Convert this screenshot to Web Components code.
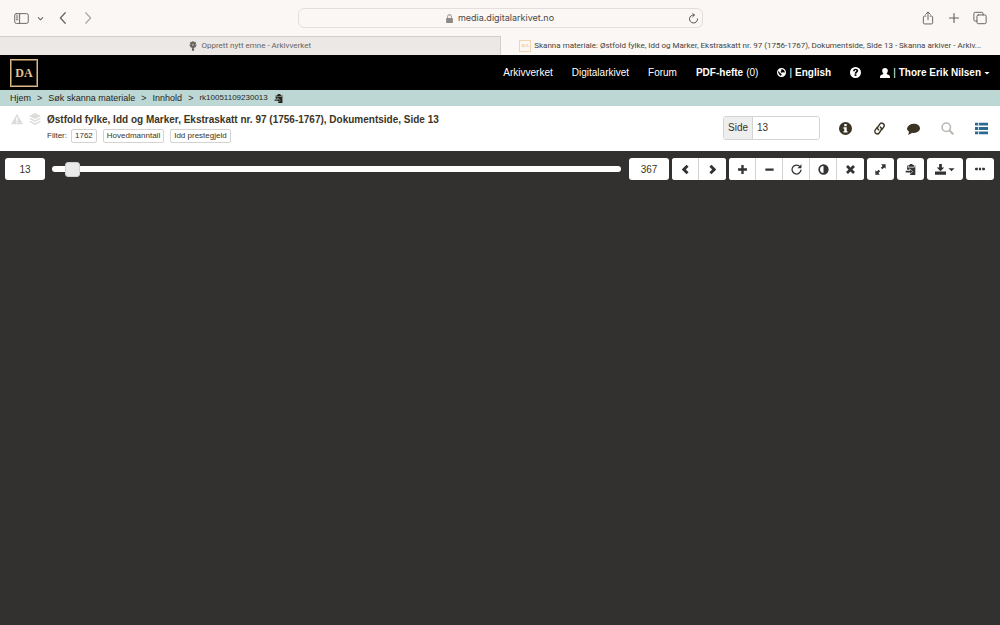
<!DOCTYPE html>
<html lang="no">
<head>
<meta charset="utf-8">
<meta name="viewport" content="width=device-width, initial-scale=1">
<title>Skanna materiale - Arkivverket</title>
<style>
html, body { margin: 0; height: 100%; }
body { font: 10px/14px "Liberation Sans", Arial, sans-serif; color: #3b3425; background: #333130; }
</style>
</head>
<body>
<da-app></da-app>
<script>
const define = (name, html, setup) => {
  const template = document.createElement('template');
  template.innerHTML = html;
  customElements.define(name, class extends HTMLElement {
    connectedCallback() {
      if (this.shadowRoot) return;
      this.attachShadow({ mode: 'open' }).append(template.content.cloneNode(true));
      if (setup) setup(this, this.shadowRoot);
    }
  });
};

const line = (d, w = 1.2) => `<path d="${d}" fill="none" stroke="currentColor" stroke-width="${w}" stroke-linecap="round" stroke-linejoin="round"/>`;
const solid = (d) => `<path d="${d}" fill="currentColor" fill-rule="evenodd"/>`;
const ICONS = {
  sidebar: line('M2.5 2.8h11a1.7 1.7 0 0 1 1.7 1.7v7a1.7 1.7 0 0 1-1.7 1.7h-11A1.7 1.7 0 0 1 .8 11.500v-7A1.7 1.7 0 0 1 2.500 2.800zM6 3v10M2.600 5.300h1.500M2.600 7.300h1.500M2.600 9.300h1.500', 1),
  down: line('M3 6l5 5 5-5', 2.4),
  back: line('M11 1L4.500 8l6.500 7', 1.6),
  forward: line('M5 1l6.500 7L5 15', 1.5),
  lock: solid('M3 7h1V4.500a4 4 0 0 1 8 0V7h1a1 1 0 0 1 1 1v7a1 1 0 0 1-1 1H3a1 1 0 0 1-1-1V8a1 1 0 0 1 1-1zm2.500 0h5V4.500a2.500 2.500 0 0 0-5 0z'),
  reload: line('M9 2.800A5.900 5.900 0 1 0 14 8.700M6.800.600L9.300 3 6.800 5.500', 1.4),
  share: line('M5.500 5.800H4a1.300 1.300 0 0 0-1.300 1.300v6.400A1.300 1.300 0 0 0 4 14.800h8a1.300 1.300 0 0 0 1.300-1.300V7.100A1.300 1.300 0 0 0 12 5.800h-1.500M8 10V1.300M5.300 3.800L8 1.200l2.700 2.600', 1.1),
  add: line('M8 2v12M2 8h12', 1.5),
  tabs: line('M6 4.500h7.500a1.500 1.500 0 0 1 1.500 1.500v7a1.500 1.500 0 0 1-1.500 1.500H6A1.500 1.500 0 0 1 4.500 13V6A1.500 1.500 0 0 1 6 4.500zM4.500 11.500h-2A1.500 1.500 0 0 1 1 10V3a1.500 1.500 0 0 1 1.500-1.500H10A1.500 1.500 0 0 1 11.500 3v1.500', 1.1),
  crest: solid('M7 0h2v2l3-1 1 3-2 1 3 1-2 4-3 1 1 2-1 3H7l-1-3 1-2-3-1-2-4 3-1-2-1 1-3 3 1zM7 5v2h2V5z'),
  globe: solid('M8 0a8 8 0 1 1 0 16A8 8 0 0 1 8 0zm1 2L6.500 3.200 8 5 6 7l2 1.500 3-1 2 1L14 7l-1.500-3-2-1.500zM3 4.500L2 8l2 3.500L7 14l1.500-3L6 9.500 4.500 8z'),
  question: solid('M8 0a8 8 0 1 1 0 16A8 8 0 0 1 8 0zM4.500 6h2.400c0-1 .5-1.500 1.200-1.500.8 0 1.300.5 1.300 1.100 0 1.300-2.600 1.500-2.600 4.100h2.400c0-1.600 2.700-1.900 2.700-4.300C11.900 3.500 10.500 2.400 8.100 2.400 5.800 2.400 4.500 3.800 4.500 6zm2.200 4.700v2.400h2.600v-2.400z'),
  user: solid('M8 0c2.800 0 4.500 1.700 4.500 4.300 0 1.800-.8 3.500-1.800 4.500v.7c2.300.6 5.300 2 5.300 4.500v2H0v-2c0-2.500 3-3.900 5.300-4.500v-.7c-1-1-1.800-2.700-1.800-4.500C3.500 1.700 5.200 0 8 0z'),
  caret: solid('M1 5h14l-7 7z'),
  clip: solid('M7 0h4v1.500h2V4H5V1.500h2zM4 2v3h10V2h1v14H6.500l5-5-5-5v2.500H3V2zM1 9.800h6.500V8l3.300 3-3.300 3v-1.800H1z'),
  warning: solid('M8 1l8 14H0zM7 5.500v5h2v-5zM7 11.500v2h2v-2z'),
  layers: solid('M8 0l8 4-8 4-8-4zM2 6.800l6 3 6-3 2 1-8 4-8-4zM2 10.800l6 3 6-3 2 1L8 16l-8-4.200z'),
  info: solid('M8 0a8 8 0 1 1 0 16A8 8 0 0 1 8 0zM6.500 2.500v2.700h3V2.500zM5.500 6.500v1.800h1v3h-1V13h5v-1.700h-1V6.500z'),
  link: '<g transform="rotate(-55 8 8)">' + line('M7.500 4.800H3.600a3 3 0 0 0 0 6H7a3 3 0 0 0 3-3M8.500 11.200h3.900a3 3 0 0 0 0-6H9a3 3 0 0 0-3 3', 1.7) + '</g>',
  comment: solid('M8.500 2C12.700 2 16 4.500 16 7.700s-3.300 5.700-7.500 5.700c-.8 0-1.600-.1-2.400-.3C4.800 14.500 3 15.300 1 15.500c.9-.9 1.500-2 1.600-3.500C1 10.900 0 9.400 0 7.700 1 4 4.300 2 8.500 2z'),
  search: '<circle cx="6.500" cy="6.500" r="5.200" fill="none" stroke="currentColor" stroke-width="2"/>' + line('M10.800 10.800l3.600 3.600', 2.6),
  list: solid('M0 1h4v3.300H0zM5 1h11v3.300H5zM0 6.300h4v3.400H0zM5 6.300h11v3.400H5zM0 11.700h4V15H0zM5 11.700h11V15H5z'),
  prev: solid('M9.500 1L12.500 4l-4 4 4 4-3 3-7-7z'),
  next: solid('M6.500 1L3.500 4l4 4-4 4 3 3 7-7z'),
  plus: solid('M6.300 1.500h3.400v4.800h4.800v3.400H9.700v4.800H6.300V9.700H1.500V6.300h4.800z'),
  minus: solid('M2 6.500h12v3.200H2z'),
  rotate: line('M13 3.800A6.500 6.500 0 1 0 14.500 9', 1.8) + solid('M15.200.5v5.800H9.400z'),
  contrast: solid('M8 .5a7.500 7.500 0 1 1 0 15 7.500 7.500 0 0 1 0-15zM8 3a5 5 0 0 0 0 10z'),
  close: solid('M4.300 1.500L8 5.200l3.700-3.700 2.800 2.800L10.800 8l3.700 3.700-2.800 2.800L8 10.800l-3.700 3.700-2.800-2.800L5.200 8 1.500 4.300z'),
  expand: solid('M9 .5h6.500V7l-2.200-2-2.600 2.500L8.500 5.300 11 2.800zM7 15.500H.5V9l2.200 2 2.600-2.500 2.200 2.200L5 13.200z'),
  download: solid('M6 0h4v5h3.500L8 10.500 2.500 5H6zM0 11h16v4.500H0z'),
  more: solid('M1.500 6h3v4h-3A1.500 1.500 0 0 1 0 8.500v-1A1.500 1.500 0 0 1 1.500 6zM6.300 6h3.400v4H6.300zM11.500 6h3A1.500 1.500 0 0 1 16 7.500v1a1.500 1.500 0 0 1-1.500 1.500h-3z')
};

define('da-icon', `<style>
:host { display: inline-flex; flex: none; width: var(--size, 12px); height: var(--size, 12px); }
svg { display: block; width: 100%; height: 100%; }
</style><svg viewBox="0 0 16 16" aria-hidden="true"></svg>`,
(host, root) => { root.querySelector('svg').innerHTML = ICONS[host.getAttribute('name')] || ''; });

define('da-logo', `<style>
:host { display: flex; flex: none; box-sizing: border-box; align-items: center; justify-content: center;
  width: 28px; height: 28px; border: 1px solid #dcb987; outline: 1px solid #6e5c43; outline-offset: -2px; color: #e5c595;
  font: bold 12px/14px "Liberation Serif", "Times New Roman", serif; }
:host([small]) { width: 12px; height: 12px; border: 1px solid #f1d6ad; outline: 0; color: #ecc792; font-size: 5px; line-height: 6px; }
</style><slot></slot>`);

define('browser-bar', `<style>
:host { display: grid; grid-template-columns: 1fr minmax(0, 405px) 1fr; align-items: center; height: 36px;
  background: #fbf7f4; color: #65615e; font: 9px/14px Inter, sans-serif; }
button { display: flex; padding: 0; border: 0; background: none; color: inherit; }
.left, .right { display: flex; align-items: center; }
.left { padding-left: 14px; gap: 13px; }
.menu { display: flex; align-items: center; gap: 8px; }
.right { justify-content: flex-end; gap: 13px; padding-right: 13px; }
.dim { color: #aaa5a1; }
.address { display: flex; box-sizing: border-box; align-items: center; justify-content: center; height: 20px; padding: 0 3px 0 13px;
  border: 1px solid #e4dfdc; border-radius: 6px; color: #4b4846; }
.address span { display: flex; flex: 1; justify-content: center; align-items: center; gap: 4px; }
.lock { color: #8d8986; }
</style>
<div class="left"><div class="menu"><button aria-label="Sidefelt"><da-icon name="sidebar" style="--size:15px"></da-icon></button>
<button aria-label="Meny"><da-icon name="down" style="--size:7px"></da-icon></button></div>
<button aria-label="Tilbake"><da-icon name="back"></da-icon></button><button class="dim" aria-label="Frem"><da-icon name="forward"></da-icon></button></div>
<div class="address"><span><da-icon class="lock" name="lock" style="--size:9px"></da-icon>media.digitalarkivet.no</span>
<button aria-label="Last inn"><da-icon name="reload" style="--size:11px"></da-icon></button></div>
<div class="right"><button aria-label="Del"><da-icon name="share" style="--size:14px"></da-icon></button>
<button aria-label="Ny fane"><da-icon name="add"></da-icon></button><button aria-label="Faner"><da-icon name="tabs" style="--size:14px"></da-icon></button></div>`);

define('browser-tab', `<style>
:host { display: flex; flex: 1 1 0; min-width: 0; box-sizing: border-box; align-items: center; justify-content: center; gap: 3px; padding: 0 12px;
  color: #454240; }
:host([idle]) { background: #ece8e6; border-top: 1px solid #d2cecb; border-right: 1px solid #d2cecb; color: #686461; }
span { overflow: hidden; text-overflow: ellipsis; white-space: nowrap; }
</style><slot name="icon"></slot><span><slot></slot></span>`);

define('browser-tabs', `<style>
:host { display: flex; height: 19px; background: #fbf7f4; font: 8px/12px Roboto, sans-serif; }
</style><browser-tab idle><da-icon slot="icon" name="crest" style="--size:10px"></da-icon>Opprett nytt emne - Arkivverket</browser-tab>
<browser-tab><da-logo slot="icon" small>DA</da-logo>Skanna materiale: Østfold fylke, Idd og Marker, Ekstraskatt nr. 97 (1756-1767), Dokumentside, Side 13 - Skanna arkiver - Arkiv...</browser-tab>`);

define('site-nav', `<style>
:host { display: flex; align-items: center; justify-content: space-between; height: 35px; padding: 0 10px; background: #000; color: #fff; }
nav { display: flex; align-items: center; gap: 19px; }
a { display: flex; align-items: center; gap: 3px; color: inherit; text-decoration: none; white-space: nowrap; }
</style><da-logo>DA</da-logo>
<nav><a href="#">Arkivverket</a><a href="#">Digitalarkivet</a><a href="#">Forum</a><a href="#"><b>PDF-hefte</b>(0)</a>
<a href="#"><da-icon name="globe" style="--size:9px"></da-icon>|<b>English</b></a>
<a href="#" aria-label="Hjelp"><da-icon name="question" style="--size:11px"></da-icon></a>
<a href="#"><da-icon name="user" style="--size:10px"></da-icon>|<b>Thore Erik Nilsen</b><da-icon name="caret" style="--size:6px"></da-icon></a></nav>`);

define('bread-crumbs', `<style>
:host { display: flex; align-items: center; height: 16px; padding: 0 10px; gap: 6px; background: #bcd7d4; color: #29251c; font-size: 9px; line-height: 16px; }
a { color: inherit; text-decoration: none; }
.id { font-size: 8px; }
button { display: flex; padding: 0; border: 0; background: none; color: inherit; }
</style><a href="#">Hjem</a>&gt;<a href="#">Søk skanna materiale</a>&gt;<a href="#">Innhold</a>&gt;<span class="id">rk10051109230013</span>
<button aria-label="Kopier"><da-icon name="clip" style="--size:9px"></da-icon></button>`);

define('filter-tag', `<style>
:host { display: block; padding: 0 3px; border: 1px solid #d5d3d0; border-radius: 2px; font-size: 8px; line-height: 12px; white-space: nowrap; }
</style><slot></slot>`);

define('source-header', `<style>
:host { display: flex; align-items: flex-start; justify-content: space-between; box-sizing: border-box; min-height: 45px; padding: 7px 12px 8px 11px; background: #fff; }
.source { display: flex; gap: 6px; }
.faded { color: #dddcda; }
h1 { margin: 0; font-size: 10px; line-height: 14px; }
.filters { display: flex; align-items: center; gap: 6px; margin-top: 2px; font-size: 8px; line-height: 14px; }
.filters span { margin-right: -2px; }
.tools { display: flex; align-items: center; gap: 21px; margin-top: 3px; }
form { display: flex; box-sizing: border-box; width: 97px; height: 24px; margin-right: -2px; border: 1px solid #d6d4d2; border-radius: 3px; overflow: hidden; }
label { padding: 0 4px; border-right: 1px solid #d6d4d2; background: #eee; line-height: 22px; }
input { flex: 1; min-width: 0; padding: 0 4px; border: 0; background: #fff; color: inherit; font: inherit; }
button { display: flex; padding: 0; border: 0; background: none; color: inherit; }
.search { color: #bbb8b4; } .list { color: #2b6a90; }
</style>
<div class="source"><da-icon class="faded" name="warning"></da-icon><da-icon class="faded" name="layers"></da-icon>
<div><h1>Østfold fylke, Idd og Marker, Ekstraskatt nr. 97 (1756-1767), Dokumentside, Side 13</h1>
<div class="filters"><span>Filter:</span><filter-tag>1762</filter-tag><filter-tag>Hovedmanntall</filter-tag><filter-tag>Idd prestegjeld</filter-tag></div></div></div>
<div class="tools"><form><label for="page">Side</label><input id="page" type="text" value="13"></form>
<button aria-label="Informasjon"><da-icon name="info" style="--size:13px"></da-icon></button><button aria-label="Lenke"><da-icon name="link" style="--size:13px"></da-icon></button>
<button aria-label="Kommentar"><da-icon name="comment" style="--size:13px"></da-icon></button><button class="search" aria-label="Søk"><da-icon name="search" style="--size:13px"></da-icon></button>
<button class="list" aria-label="Liste"><da-icon name="list" style="--size:13px"></da-icon></button></div>`);

define('tool-group', `<style>
:host { display: flex; height: 22px; border-radius: 3px; overflow: hidden; background: #fff; }
::slotted(tool-button:not(:first-child)) { box-shadow: -1px 0 #d4d2d0; }
</style><slot></slot>`);

define('tool-button', `<style>
:host { display: flex; }
button { display: flex; align-items: center; justify-content: center; gap: 2px; min-width: 27px; padding: 0 8px; border: 0; background: #fff; color: #333; }
:host([wide]) button { padding: 0 9px; }
</style><button><slot></slot></button>`,
(host, root) => root.querySelector('button').setAttribute('aria-label', host.getAttribute('label')));

define('page-slider', `<style>
:host { display: flex; flex: 1; min-width: 0; align-items: center; }
.track { display: flex; flex: 1; height: 6px; align-items: center; border-radius: 3px; background: #fff; }
input { appearance: none; flex: 1; min-width: 0; height: 16px; margin: 0 -7px; background: none; }
input::-webkit-slider-thumb { appearance: none; box-sizing: border-box; width: 15px; height: 15px; border: 1px solid #cfcfcf; border-radius: 3px; background: #e9e9e9; }
</style><div class="track"><input type="range" min="0" max="367" value="13" aria-label="Side"></div>`);

define('viewer-toolbar', `<style>
:host { display: flex; align-items: center; gap: 3px; padding: 7px 6px 7px 5px; color: #3b3425; }
input { box-sizing: border-box; width: 40px; height: 22px; padding: 0; border: 0; border-radius: 3px; background: #fff; color: inherit; font: inherit; text-align: center; }
page-slider { margin: 0 5px 0 4px; }
tool-group { --size: 11px; }
</style><input type="text" value="13" aria-label="Gå til side"><page-slider></page-slider><input type="text" value="367" aria-label="Siste side" readonly>
<tool-group><tool-button label="Forrige"><da-icon name="prev"></da-icon></tool-button><tool-button label="Neste"><da-icon name="next"></da-icon></tool-button></tool-group>
<tool-group><tool-button label="Zoom inn"><da-icon name="plus"></da-icon></tool-button><tool-button label="Zoom ut"><da-icon name="minus"></da-icon></tool-button>
<tool-button label="Roter"><da-icon name="rotate"></da-icon></tool-button><tool-button label="Kontrast"><da-icon name="contrast"></da-icon></tool-button><tool-button label="Nullstill"><da-icon name="close"></da-icon></tool-button></tool-group>
<tool-group><tool-button label="Fullskjerm"><da-icon name="expand"></da-icon></tool-button></tool-group>
<tool-group><tool-button label="Kopier"><da-icon name="clip"></da-icon></tool-button></tool-group>
<tool-group><tool-button label="Last ned"><da-icon name="download"></da-icon><da-icon name="caret" style="--size:7px"></da-icon></tool-button></tool-group>
<tool-group><tool-button wide label="Mer"><da-icon name="more" style="--size:10px"></da-icon></tool-button></tool-group>`);

define('da-app', `<style>
:host { display: flex; flex-direction: column; min-height: 100%; }
main { flex: 1; background: #333130; }
</style><browser-bar></browser-bar><browser-tabs></browser-tabs><site-nav></site-nav><bread-crumbs></bread-crumbs><source-header></source-header>
<main><viewer-toolbar></viewer-toolbar></main>`);
</script>
</body>
</html>
